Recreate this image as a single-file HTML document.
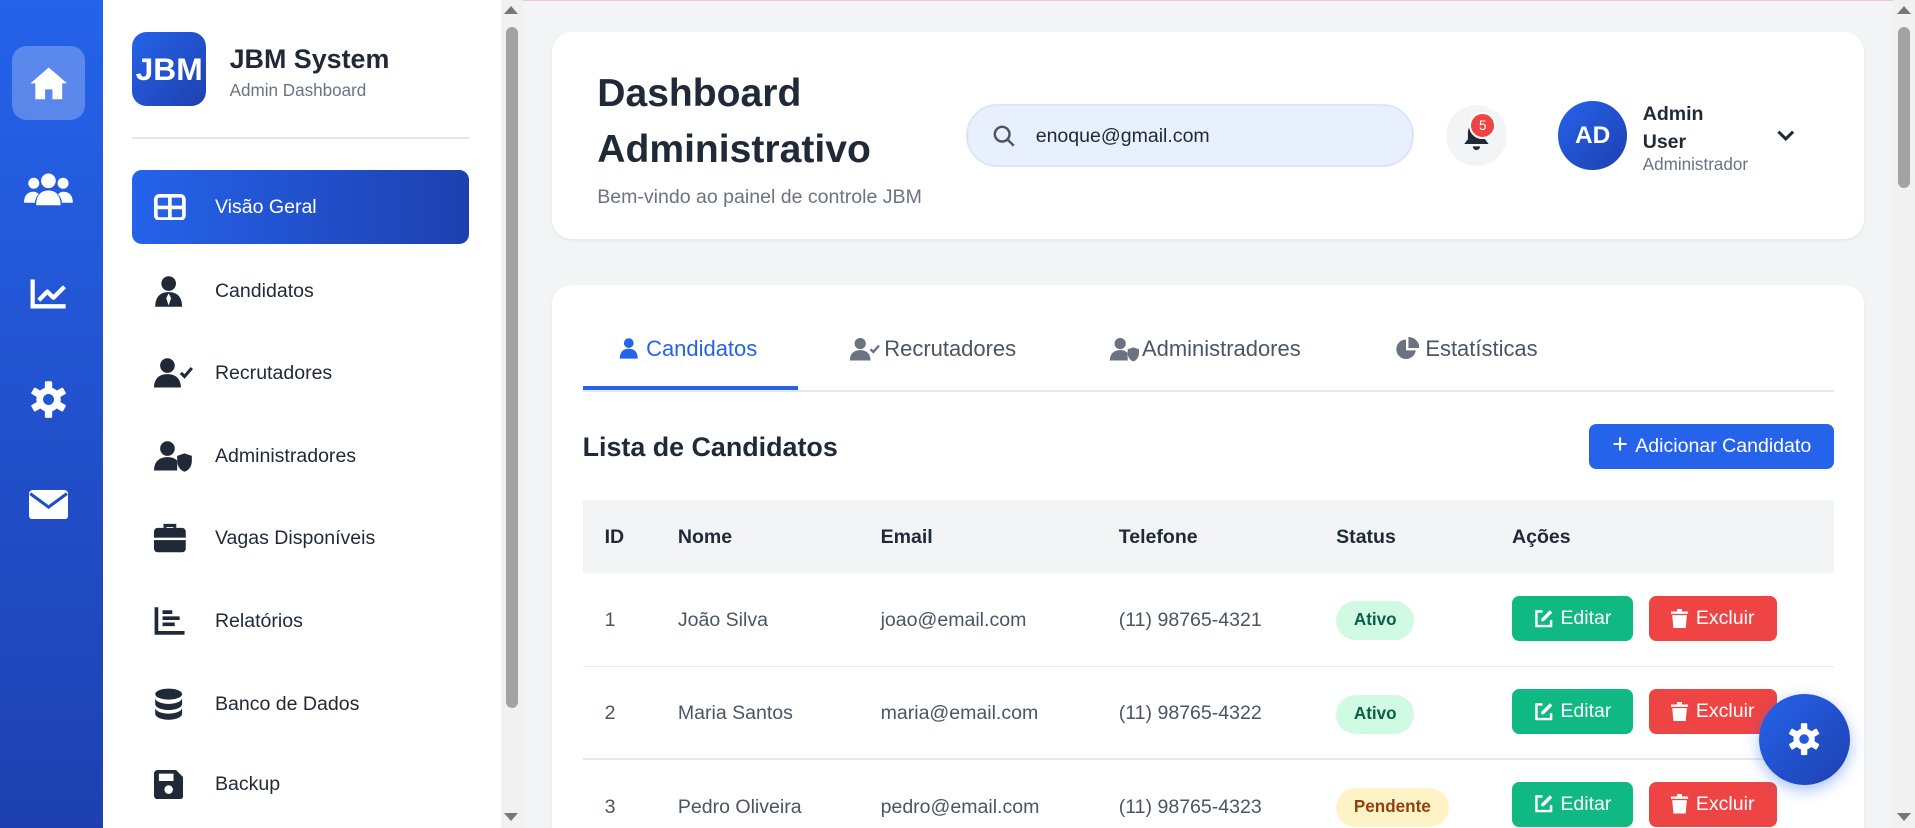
<!DOCTYPE html>
<html><head><meta charset="utf-8"><style>
*{box-sizing:border-box;margin:0;padding:0}
html,body{width:1915px;height:828px;overflow:hidden;background:#f3f4f6}
#w{zoom:1.22136;width:1568px;height:678px;position:relative;font-family:"Liberation Sans",sans-serif;color:#1f2937;overflow:hidden}
.abs{position:absolute}
#rail{left:0;top:0;width:84px;height:678px;background:linear-gradient(#2563eb,#1e40af)}
.ri{position:absolute;left:10px;width:60px;height:60px;border-radius:12px;display:flex;align-items:center;justify-content:center}
#side{left:84px;top:0;width:344px;height:678px;background:#fff}
.it{position:absolute;left:108px;width:276px;height:61px;display:flex;align-items:center;font-size:16px;color:#1f2937}
.it svg{position:absolute;left:18px}
.it span{position:absolute;left:68px}
.sb{position:absolute;background:#f1f1f1}
.card{position:absolute;background:#fff;border-radius:16px}
.th{position:absolute;top:431px;font-weight:bold;font-size:16px}
.td{position:absolute;font-size:16px;color:#4b5563}
.badge{position:absolute;height:32px;border-radius:16px;font-size:14px;font-weight:bold;display:flex;align-items:center;justify-content:center}
.btn{position:absolute;height:37px;border-radius:6px;color:#fff;font-size:16px;display:flex;align-items:center;justify-content:center;gap:6px}
</style></head><body><div id="w">
<div class="abs" style="left:0;top:0;width:1568px;height:1px;background:#f3c5d0"></div>
<div class="abs" id="rail">
<div class="ri" style="top:38px;background:rgba(255,255,255,.25)"><svg width="34" height="30" viewBox="0 0 34 30"><path d="M17 2L2 15h4v13h8v-8h6v8h8V15h4z" fill="#fff"/></svg></div>
<div class="ri" style="top:125px"><svg width="40" height="30" viewBox="0 0 40 30"><circle cx="20" cy="8" r="6" fill="#fff"/><circle cx="8" cy="10" r="4.5" fill="#fff"/><circle cx="32" cy="10" r="4.5" fill="#fff"/><path d="M10 28c0-8 4-12 10-12s10 4 10 12z M0 26c0-6 3-9 8-9 2 0 3 1 4 2-2 2-3 5-3 7z M40 26c0-6-3-9-8-9-2 0-3 1-4 2 2 2 3 5 3 7z" fill="#fff"/></svg></div>
<div class="ri" style="top:211px"><svg width="32" height="28" viewBox="0 0 32 28"><path d="M3 2v22h27" stroke="#fff" stroke-width="3.5" fill="none"/><path d="M8 19l7-7 5 5 9-9" stroke="#fff" stroke-width="3.5" fill="none" stroke-linejoin="round"/></svg></div>
<div class="ri" style="top:297px"><svg width="32" height="32" viewBox="0 0 32 32"><g fill="#fff"><circle cx="16" cy="16" r="10"/><rect x="13" y="1" width="6" height="30" rx="1"/><rect x="13" y="1" width="6" height="30" rx="1" transform="rotate(60 16 16)"/><rect x="13" y="1" width="6" height="30" rx="1" transform="rotate(120 16 16)"/></g><circle cx="16" cy="16" r="4.5" fill="#2057d6"/></svg></div>
<div class="ri" style="top:383px"><svg width="32" height="24" viewBox="0 0 32 24"><rect x="0" y="0" width="32" height="24" rx="3" fill="#fff"/><path d="M1 3l15 11 15-11" stroke="#1f4fc4" stroke-width="2.5" fill="none"/></svg></div>
</div>
<div class="abs" id="side">
<div class="abs" style="left:24px;top:26px;width:61px;height:61px;border-radius:12px;background:linear-gradient(135deg,#2563eb,#1e40af);color:#fff;font-weight:bold;font-size:26px;display:flex;align-items:center;justify-content:center">JBM</div>
<div class="abs" style="left:104px;top:36px;font-size:22px;font-weight:bold">JBM System</div>
<div class="abs" style="left:104px;top:66px;font-size:14px;color:#6b7280">Admin Dashboard</div>
<div class="abs" style="left:24px;top:112px;width:276px;height:2px;background:#e5e7eb"></div>
<div class="sb" style="left:326px;top:0;width:18px;height:678px"></div>
<div class="abs" style="left:330px;top:22px;width:10px;height:558px;border-radius:5px;background:#a3a3a3"></div>
<div class="abs" style="left:329px;top:5px;width:0;height:0;border:6px solid transparent;border-bottom:7px solid #777;border-top:0"></div>
<div class="abs" style="left:329px;top:666px;width:0;height:0;border:6px solid transparent;border-top:7px solid #777;border-bottom:0"></div>
</div>
<div class="it" style="top:139px;background:linear-gradient(90deg,#2563eb,#1e40af);border-radius:8px;color:#fff"><svg width="26" height="22" viewBox="0 0 26 22"><rect x="1.5" y="1.5" width="23" height="19" rx="3" fill="none" stroke="#fff" stroke-width="3"/><path d="M13 2v18M2 11h22" stroke="#fff" stroke-width="3"/></svg><span>Visão Geral</span></div>
<div class="it" style="top:208px"><svg width="24" height="26" viewBox="0 0 24 26"><circle cx="12" cy="7" r="6" fill="#1f2937"/><path d="M1 26c0-8 4-12 11-12s11 4 11 12z" fill="#1f2937"/><path d="M12 15l-2 4 2 6 2-6z" fill="#fff"/></svg><span>Candidatos</span></div>
<div class="it" style="top:275px"><svg width="32" height="26" viewBox="0 0 32 26"><circle cx="11" cy="7" r="6" fill="#1f2937"/><path d="M0 25c0-7 4-11 11-11s11 4 11 11z" fill="#1f2937"/><path d="M22 13l3 3 6-7" stroke="#1f2937" stroke-width="2.5" fill="none"/></svg><span>Recrutadores</span></div>
<div class="it" style="top:343px"><svg width="32" height="26" viewBox="0 0 32 26"><circle cx="11" cy="7" r="6" fill="#1f2937"/><path d="M0 25c0-7 4-11 11-11 4 0 6 1 8 3v8z" fill="#1f2937"/><path d="M25 11l6 2v4c0 5-3 8-6 9-3-1-6-4-6-9v-4z" fill="#1f2937"/></svg><span>Administradores</span></div>
<div class="it" style="top:410px"><svg width="26" height="24" viewBox="0 0 26 24"><path d="M9 4V2h8v2" stroke="#1f2937" stroke-width="2.5" fill="none"/><rect x="0" y="4" width="26" height="20" rx="3" fill="#1f2937"/><rect x="0" y="12" width="26" height="2" fill="#fff"/></svg><span>Vagas Disponíveis</span></div>
<div class="it" style="top:478px"><svg width="26" height="24" viewBox="0 0 26 24"><path d="M2 1v21h23" stroke="#1f2937" stroke-width="3" fill="none"/><path d="M7 5h8M7 10h14M7 15h10" stroke="#1f2937" stroke-width="3"/></svg><span>Relatórios</span></div>
<div class="it" style="top:546px"><svg width="24" height="26" viewBox="0 0 24 26"><ellipse cx="12" cy="5" rx="11" ry="4.5" fill="#1f2937"/><path d="M1 8c0 3 5 5 11 5s11-2 11-5v5c0 3-5 5-11 5S1 16 1 13zM1 16c0 3 5 5 11 5s11-2 11-5v5c0 3-5 5-11 5S1 24 1 21z" fill="#1f2937"/></svg><span>Banco de Dados</span></div>
<div class="it" style="top:612px"><svg width="24" height="24" viewBox="0 0 24 24"><path d="M0 3a3 3 0 013-3h15l6 6v15a3 3 0 01-3 3H3a3 3 0 01-3-3z" fill="#1f2937"/><rect x="4" y="3" width="12" height="6" fill="#fff"/><circle cx="12" cy="16" r="3.5" fill="#fff"/></svg><span>Backup</span></div>

<div class="sb" style="left:1550px;top:0;width:18px;height:678px"></div>
<div class="abs" style="left:1554px;top:22px;width:10px;height:132px;border-radius:5px;background:#a3a3a3"></div>
<div class="abs" style="left:1553px;top:5px;border:6px solid transparent;border-bottom:7px solid #777;border-top:0"></div>
<div class="abs" style="left:1553px;top:666px;border:6px solid transparent;border-top:7px solid #777;border-bottom:0"></div>

<div class="card" style="left:452px;top:26px;width:1074px;height:170px;box-shadow:0 1px 3px rgba(0,0,0,.06)"></div>
<div class="abs" style="left:489px;top:54px;font-size:32px;font-weight:bold;line-height:46px">Dashboard<br>Administrativo</div>
<div class="abs" style="left:489px;top:152px;font-size:16px;color:#6b7280">Bem-vindo ao painel de controle JBM</div>
<div class="abs" style="left:791px;top:85px;width:367px;height:52px;border-radius:26px;background:#e8f0fe;border:2px solid #dbe5f7"></div>
<svg class="abs" style="left:813px;top:102px" width="18" height="18" viewBox="0 0 18 18"><circle cx="7.5" cy="7.5" r="6" stroke="#4b5563" stroke-width="2" fill="none"/><path d="M12 12l5 5" stroke="#4b5563" stroke-width="2"/></svg>
<div class="abs" style="left:848px;top:102px;font-size:16px">enoque@gmail.com</div>
<div class="abs" style="left:1184px;top:86px;width:50px;height:50px;border-radius:25px;background:#f3f4f6"></div>
<svg class="abs" style="left:1198px;top:100px" width="22" height="24" viewBox="0 0 22 24"><path d="M11 1c-5 0-7 4-7 8v5l-3 4h20l-3-4V9c0-4-2-8-7-8z" fill="#1f2937"/><path d="M8 20a3 3 0 006 0z" fill="#1f2937"/></svg>
<div class="abs" style="left:1203px;top:92px;width:22px;height:22px;border-radius:11px;background:#ef4444;border:2px solid #fff;color:#fff;font-size:11px;display:flex;align-items:center;justify-content:center">5</div>
<div class="abs" style="left:1276px;top:83px;width:56px;height:56px;border-radius:28px;background:linear-gradient(135deg,#2563eb,#1e40af);color:#fff;font-weight:bold;font-size:20px;display:flex;align-items:center;justify-content:center">AD</div>
<div class="abs" style="left:1345px;top:82px;font-size:16px;font-weight:bold;line-height:23px">Admin<br>User</div>
<div class="abs" style="left:1345px;top:127px;font-size:14px;color:#6b7280">Administrador</div>
<svg class="abs" style="left:1454px;top:105px" width="16" height="12" viewBox="0 0 16 12"><path d="M2 3l6 6 6-6" stroke="#1f2937" stroke-width="2.5" fill="none"/></svg>

<div class="card" style="left:452px;top:233px;width:1074px;height:445px;border-radius:16px 16px 0 0;box-shadow:0 1px 3px rgba(0,0,0,.06)"></div>
<div class="abs" style="left:477px;top:319px;width:1025px;height:2px;background:#e5e7eb"></div>
<div class="abs" style="left:477px;top:316px;width:176px;height:3px;background:#2563eb"></div>
<svg class="abs" style="left:507px;top:276px" width="16" height="18" viewBox="0 0 24 26"><circle cx="12" cy="7" r="6" fill="#2563eb"/><path d="M1 26c0-8 4-12 11-12s11 4 11 12z" fill="#2563eb"/></svg>
<div class="abs" style="left:529px;top:275px;font-size:18px;color:#2563eb">Candidatos</div>
<svg class="abs" style="left:695px;top:276px" width="26" height="20" viewBox="0 0 32 26"><circle cx="11" cy="7" r="6" fill="#6b7280"/><path d="M0 25c0-7 4-11 11-11s11 4 11 11z" fill="#6b7280"/><path d="M22 13l3 3 6-7" stroke="#6b7280" stroke-width="2.5" fill="none"/></svg>
<div class="abs" style="left:724px;top:275px;font-size:18px;color:#4b5563">Recrutadores</div>
<svg class="abs" style="left:908px;top:276px" width="26" height="20" viewBox="0 0 32 26"><circle cx="11" cy="7" r="6" fill="#6b7280"/><path d="M0 25c0-7 4-11 11-11 4 0 6 1 8 3v8z" fill="#6b7280"/><path d="M25 11l6 2v4c0 5-3 8-6 9-3-1-6-4-6-9v-4z" fill="#6b7280"/></svg>
<div class="abs" style="left:935px;top:275px;font-size:18px;color:#4b5563">Administradores</div>
<svg class="abs" style="left:1142px;top:276px" width="20" height="20" viewBox="0 0 20 20"><path d="M9 2a8 8 0 108 9H9z" fill="#6b7280"/><path d="M11 0v9h9a9 9 0 00-9-9z" fill="#6b7280"/></svg>
<div class="abs" style="left:1167px;top:275px;font-size:18px;color:#4b5563">Estatísticas</div>

<div class="abs" style="left:477px;top:354px;font-size:22px;font-weight:bold">Lista de Candidatos</div>
<div class="btn" style="left:1301px;top:347px;width:201px;background:#2563eb;font-size:16px"><b style="font-size:22px;font-weight:normal;margin-top:-3px">+</b>Adicionar Candidato</div>

<div class="abs" style="left:477px;top:409px;width:1025px;height:60px;background:#f3f4f6"></div>
<div class="th" style="left:495px">ID</div><div class="th" style="left:555px">Nome</div><div class="th" style="left:721px">Email</div><div class="th" style="left:916px">Telefone</div><div class="th" style="left:1094px">Status</div><div class="th" style="left:1238px">Ações</div>
<div class="abs" style="left:477px;top:545px;width:1025px;height:1px;background:#e5e7eb"></div>
<div class="abs" style="left:477px;top:621px;width:1025px;height:1px;background:#e5e7eb"></div>

<div class="td" style="left:495px;top:499px">1</div><div class="td" style="left:555px;top:499px">João Silva</div><div class="td" style="left:721px;top:499px">joao@email.com</div><div class="td" style="left:916px;top:499px">(11) 98765-4321</div>
<div class="badge" style="left:1094px;top:492px;width:64px;background:#d1fae5;color:#065f46">Ativo</div>
<div class="td" style="left:495px;top:575px">2</div><div class="td" style="left:555px;top:575px">Maria Santos</div><div class="td" style="left:721px;top:575px">maria@email.com</div><div class="td" style="left:916px;top:575px">(11) 98765-4322</div>
<div class="badge" style="left:1094px;top:569px;width:64px;background:#d1fae5;color:#065f46">Ativo</div>
<div class="td" style="left:495px;top:652px">3</div><div class="td" style="left:555px;top:652px">Pedro Oliveira</div><div class="td" style="left:721px;top:652px">pedro@email.com</div><div class="td" style="left:916px;top:652px">(11) 98765-4323</div>
<div class="badge" style="left:1094px;top:645px;width:92px;background:#fef3c7;color:#92400e">Pendente</div>

<div class="btn" style="left:1238px;top:488px;width:99px;background:#10b981"><svg width="16" height="16" viewBox="0 0 16 16"><path d="M7 2H2v12h12V9" stroke="#fff" stroke-width="2" fill="none"/><path d="M13 1l2 2-7 7H6V8z" fill="#fff"/></svg>Editar</div>
<div class="btn" style="left:1350px;top:488px;width:105px;background:#ef4444"><svg width="14" height="16" viewBox="0 0 14 16"><path d="M0 2h14v2H0zM5 0h4v2H5zM1 5h12l-1 11H2z" fill="#fff"/></svg>Excluir</div>
<div class="btn" style="left:1238px;top:564px;width:99px;background:#10b981"><svg width="16" height="16" viewBox="0 0 16 16"><path d="M7 2H2v12h12V9" stroke="#fff" stroke-width="2" fill="none"/><path d="M13 1l2 2-7 7H6V8z" fill="#fff"/></svg>Editar</div>
<div class="btn" style="left:1350px;top:564px;width:105px;background:#ef4444"><svg width="14" height="16" viewBox="0 0 14 16"><path d="M0 2h14v2H0zM5 0h4v2H5zM1 5h12l-1 11H2z" fill="#fff"/></svg>Excluir</div>
<div class="btn" style="left:1238px;top:640px;width:99px;background:#10b981"><svg width="16" height="16" viewBox="0 0 16 16"><path d="M7 2H2v12h12V9" stroke="#fff" stroke-width="2" fill="none"/><path d="M13 1l2 2-7 7H6V8z" fill="#fff"/></svg>Editar</div>
<div class="btn" style="left:1350px;top:640px;width:105px;background:#ef4444"><svg width="14" height="16" viewBox="0 0 14 16"><path d="M0 2h14v2H0zM5 0h4v2H5zM1 5h12l-1 11H2z" fill="#fff"/></svg>Excluir</div>

<div class="abs" style="left:1440px;top:568px;width:75px;height:75px;border-radius:38px;background:linear-gradient(135deg,#2563eb,#1e40af);box-shadow:0 4px 12px rgba(37,99,235,.4);display:flex;align-items:center;justify-content:center"><svg width="28" height="28" viewBox="0 0 32 32"><g fill="#fff"><circle cx="16" cy="16" r="10"/><rect x="13" y="1" width="6" height="30" rx="1"/><rect x="13" y="1" width="6" height="30" rx="1" transform="rotate(60 16 16)"/><rect x="13" y="1" width="6" height="30" rx="1" transform="rotate(120 16 16)"/></g><circle cx="16" cy="16" r="4.5" fill="#2358d8"/></svg></div>
</div></body></html>
